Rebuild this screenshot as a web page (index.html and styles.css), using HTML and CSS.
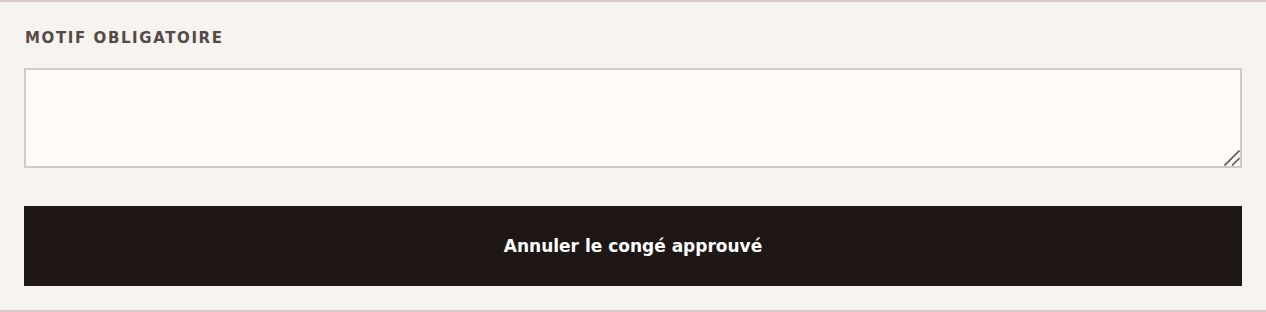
FILE: index.html
```html
<!DOCTYPE html>
<html lang="fr">
<head>
    <meta charset="UTF-8">
    <meta name="viewport" content="width=device-width, initial-scale=1.0">
    <title>Annuler le congé</title>
    <link rel="stylesheet" href="styles.css">
</head>
<body>
    <form class="cancel-panel">
        <label for="motif" class="field-label">Motif obligatoire</label>
        <div class="motif-wrap">
            <textarea id="motif" name="motif" class="motif-input"></textarea>
            <svg class="resize-grip" width="16" height="16" viewBox="0 0 16 16" aria-hidden="true">
                <path d="M0.5 15.5 L15.5 0.5 M8 15.5 L15.5 8" stroke="#5c5857" stroke-width="1.6" fill="none"/>
            </svg>
        </div>
        <button type="submit" class="cancel-button">Annuler le congé approuvé</button>
    </form>
</body>
</html>
```

FILE: styles.css
```css
body {
    margin: 0;
    padding: 0;
    background-color: #f7f3ee;
    font-family: "DejaVu Sans", Inter, sans-serif;
}
.cancel-panel {
    display: flex;
    flex-direction: column;
    padding: 24px;
    border-top: 2px solid #d8ccc8;
    border-bottom: 2px solid #d8ccc8;
    background-color: #f7f3ee;
    height: 312px;
    box-sizing: border-box;
}
.field-label {
    font-size: 15px;
    line-height: 20px;
    font-weight: bold;
    letter-spacing: 1.6px;
    text-transform: uppercase;
    color: #554b46;
    padding-left: 1px;
    margin-top: 2px;
    margin-bottom: 20px;
}
.motif-wrap {
    position: relative;
    display: flex;
}
.motif-input {
    flex: 1;
    height: 100px;
    box-sizing: border-box;
    border: 2px solid #d3cac6;
    border-radius: 0;
    background-color: #fffbf9;
    padding: 8px 10px;
    margin: 0;
    font-family: inherit;
    font-size: 15px;
    outline: none;
    resize: none;
}
.resize-grip {
    position: absolute;
    right: 2px;
    bottom: 2px;
    pointer-events: none;
}
.cancel-button {
    margin-top: 38px;
    height: 80px;
    border: none;
    border-radius: 0;
    background-color: #1f1715;
    color: #fff;
    font-family: inherit;
    font-size: 17px;
    font-weight: bold;
    cursor: pointer;
}
```
